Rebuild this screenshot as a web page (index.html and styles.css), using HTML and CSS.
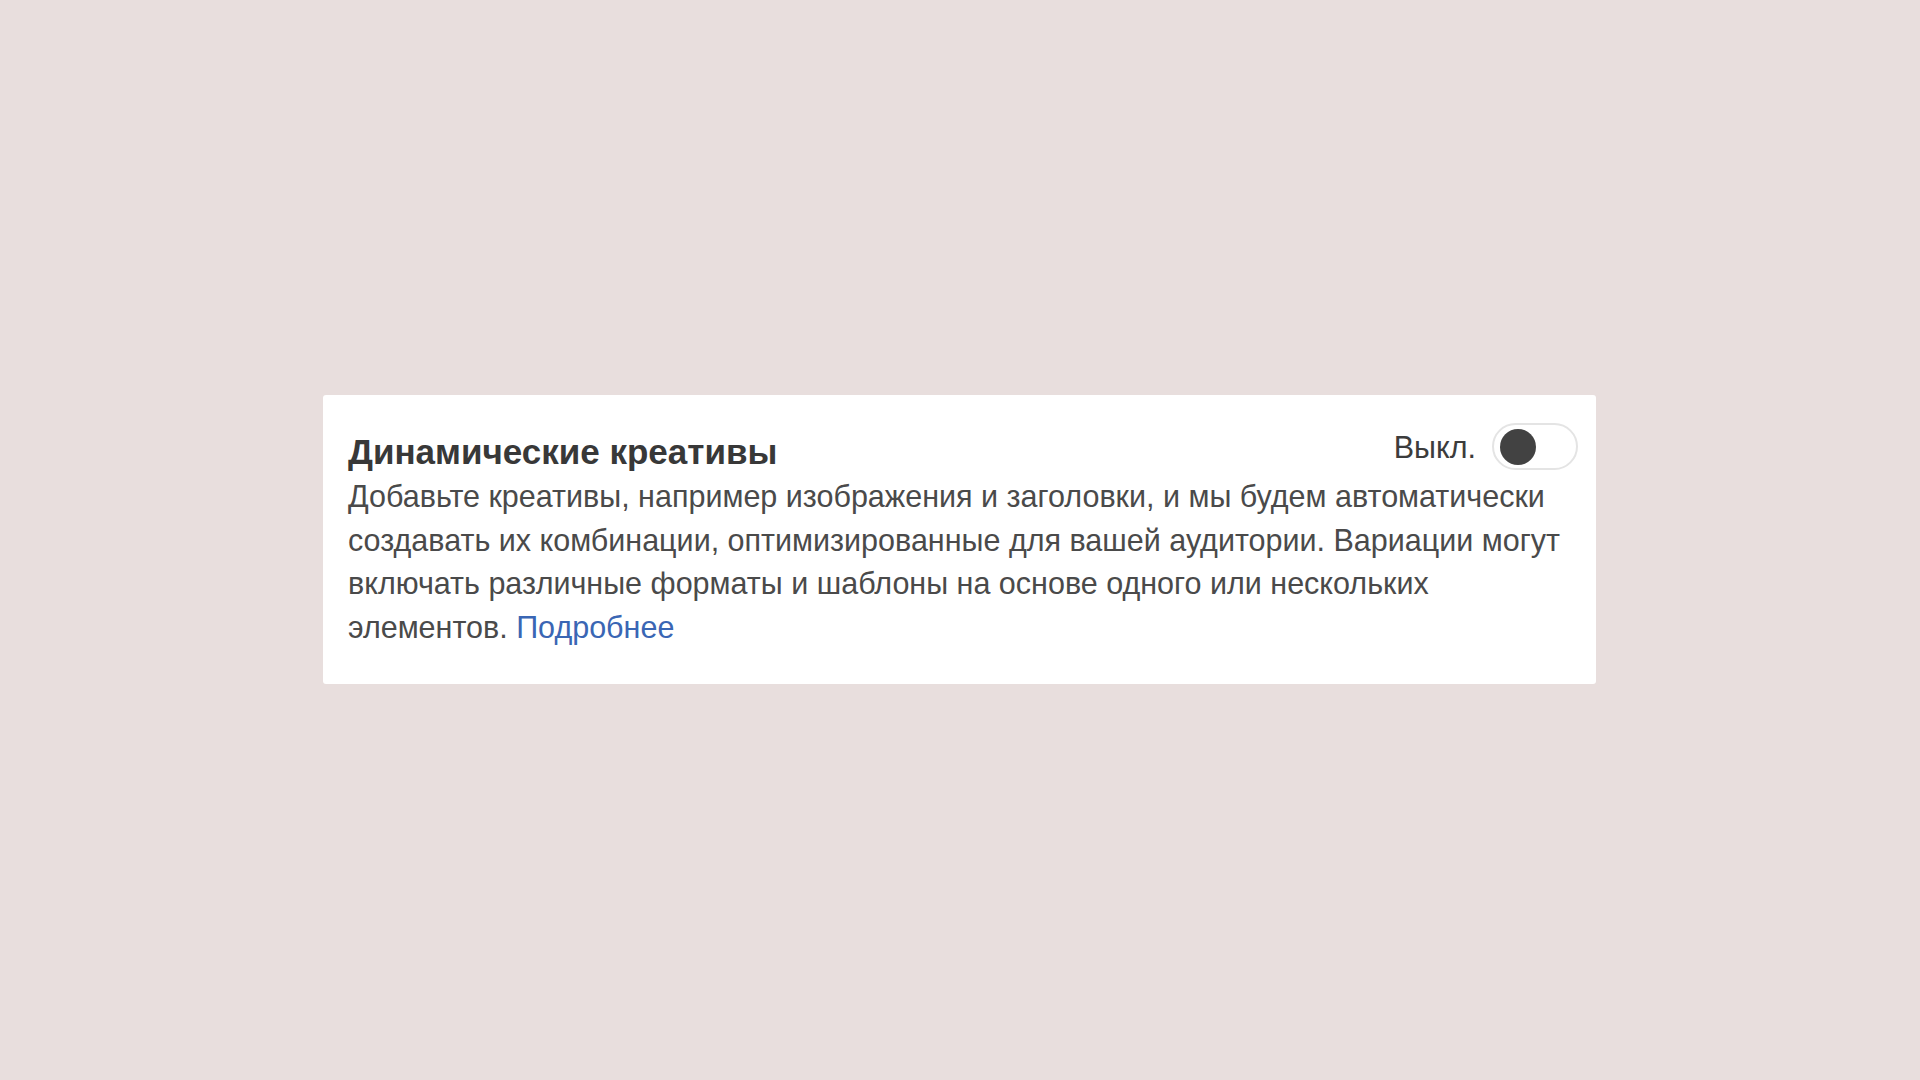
FILE: index.html
```html
<!DOCTYPE html>
<html lang="ru">
<head>
<meta charset="utf-8">
<title>Динамические креативы</title>
<link rel="stylesheet" href="styles.css">
</head>
<body>
<main class="page">
  <section class="card">
    <div class="card-head">
      <h2 class="title">Динамические креативы</h2>
      <div class="switch-group">
        <span class="switch-label">Выкл.</span>
        <span class="switch" role="switch" aria-checked="false"><span class="knob"></span></span>
      </div>
    </div>
    <p class="desc">Добавьте креативы, например изображения и заголовки, и мы будем автоматически создавать их комбинации, оптимизированные для вашей аудитории. Вариации могут включать различные форматы и шаблоны на основе одного или нескольких элементов. <a class="link" href="#">Подробнее</a></p>
  </section>
</main>
</body>
</html>
```

FILE: styles.css
```css
html, body {
  margin: 0;
  padding: 0;
}
body {
  background: #e8dedd;
  font-family: "Liberation Sans", Arial, sans-serif;
  width: 1920px;
  height: 1080px;
}
.page {
  padding-top: 395px;
  padding-left: 323px;
}
.card {
  box-sizing: border-box;
  width: 1273px;
  height: 289px;
  background: #ffffff;
  border-radius: 3px;
  padding: 28px 18px 0 25px;
}
.card-head {
  display: flex;
  justify-content: space-between;
  align-items: flex-end;
}
.title {
  margin: 0;
  font-size: 35px;
  line-height: 36px;
  font-weight: 700;
  color: #383838;
}
.switch-group {
  display: flex;
  align-items: center;
  gap: 16px;
}
.switch-label {
  font-size: 30.5px;
  line-height: 36px;
  color: #3c3c3c;
}
.switch {
  box-sizing: border-box;
  width: 86px;
  height: 47px;
  border: 2px solid #e4e4e4;
  border-radius: 24px;
  display: flex;
  align-items: center;
  padding-left: 6px;
  background: #fff;
}
.knob {
  width: 36px;
  height: 36px;
  border-radius: 50%;
  background: #424242;
}
.desc {
  margin: 5px 0 0;
  font-size: 30.5px;
  line-height: 43.6px;
  color: #4a4a4a;
}
.link {
  color: #3a66b4;
  text-decoration: none;
}
```
